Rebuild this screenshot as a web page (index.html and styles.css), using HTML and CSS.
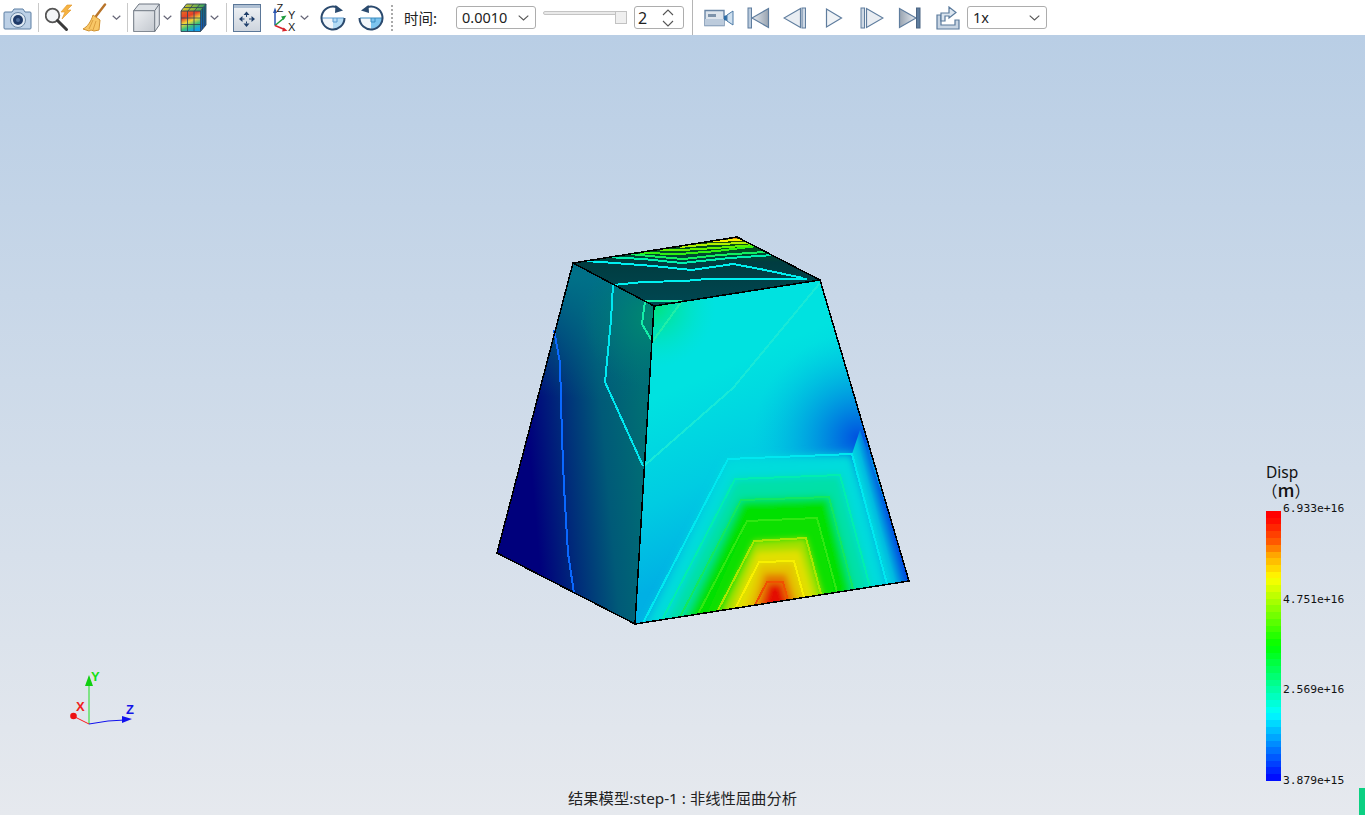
FILE: index.html
```html
<!DOCTYPE html>
<html lang="zh">
<head>
<meta charset="utf-8">
<title>结果模型</title>
<link rel="stylesheet" href="styles.css">
</head>
<body>
<header class="toolbar">
  <div class="group group-a">
    <svg class="icon" width="30" height="24" viewBox="0 0 30 24"><path d="M2 6h7l2-3h9l2 3h5a1 1 0 0 1 1 1v15a1 1 0 0 1-1 1H2a1 1 0 0 1-1-1V7a1 1 0 0 1 1-1z" fill="#bcd0e6" stroke="#5d7fa3"/><circle cx="15" cy="14" r="7.500" fill="#dfe9f3" stroke="#6c88a6"/><circle cx="15" cy="14" r="5" fill="#1f3a68"/><circle cx="15" cy="14" r="2" fill="#4e6d9c"/></svg>
  </div>
  <span class="sep"></span>
  <div class="group group-b">
    <svg class="icon" width="28" height="28" viewBox="0 0 28 28"><path d="M22 1l-6 7h4l-3 7 9-9h-4l5-5z" fill="#f5b342" stroke="#e0952a" stroke-width=".6"/><circle cx="7.500" cy="11.500" r="6.800" fill="#f3f5f7" stroke="#555" stroke-width="1.800"/><path d="M12.500 16.500l9 9" stroke="#3a3a3a" stroke-width="3" stroke-linecap="round"/></svg>
    <svg class="icon broom" width="26" height="30" viewBox="0 0 26 30"><path d="M23 1.500L13 14.500" stroke="#b8742a" stroke-width="2.400" stroke-linecap="round"/><path d="M11 12l7 5-1 10-5 1-3-1-2 1-3-1-3-1c4-2 8-7 10-14z" fill="#f8c766" stroke="#d0912f"/><path d="M11 17l-4 9M14 18l-3 9" stroke="#dc9f40"/></svg>
    <svg class="chev" width="9" height="5" viewBox="0 0 9 5"><path d="M.7.7l3.800 3.500L8.300.7" fill="none" stroke="#667" stroke-width="1.200"/></svg>
  </div>
  <span class="sep"></span>
  <div class="group group-c">
    <svg class="icon" width="27" height="29" viewBox="0 0 27 29"><defs><linearGradient id="cubeFace" x1="0" y1="0" x2="1" y2="1"><stop offset="0" stop-color="#eef0f3"/><stop offset="1" stop-color="#c3c8cf"/></linearGradient></defs><path d="M.7 7.700L6 1h20.300v21l-4.600 6.700z" fill="#dde1e6" stroke="#6d7580"/><path d="M.7 7.700h21v21h-21z" fill="url(#cubeFace)" stroke="#6d7580"/><path d="M21.700 7.700L26.300 1" stroke="#6d7580"/></svg>
    <svg class="chev" width="9" height="5" viewBox="0 0 9 5"><path d="M.7.7l3.800 3.500L8.300.7" fill="none" stroke="#667" stroke-width="1.200"/></svg>
    <svg class="icon rubik" width="27" height="29" viewBox="0 0 27 29"><defs><linearGradient id="rubikFace" x1=".1" y1="0" x2=".5" y2="1"><stop offset="0" stop-color="#e66a1e"/><stop offset=".3" stop-color="#e5402a"/><stop offset=".55" stop-color="#f2d83a"/><stop offset=".78" stop-color="#3cc07a"/><stop offset="1" stop-color="#14a0e8"/></linearGradient><linearGradient id="rubikTop" x1="0" x2="1"><stop offset="0" stop-color="#e8c828"/><stop offset="1" stop-color="#2ca060"/></linearGradient><linearGradient id="rubikSide" x1="0" y1="0" x2="0" y2="1"><stop offset="0" stop-color="#137a78"/><stop offset="1" stop-color="#1458c8"/></linearGradient></defs><path d="M1 8l5.500-7H26L20.500 8z" fill="url(#rubikTop)"/><path d="M20.500 8L26 1v21l-5.500 6.500z" fill="url(#rubikSide)"/><path d="M1 8h19.500v20.500H1z" fill="url(#rubikFace)"/><path d="M1 8l5.500-7H26v21l-5.500 6.500H1zM1 8h19.500v20.500M20.500 8L26 1" fill="none" stroke="#2c4458" stroke-width=".9"/><path d="M7.500 8v20.500M14 8v20.500M1 15h19.500M1 21.500h19.500M8 8l5.500-7M14.500 8L20 1M4 4.500h19M22.500 6v20M24.300 3.500v20" stroke="#2c4458" stroke-width=".8" fill="none"/></svg>
    <svg class="chev" width="9" height="5" viewBox="0 0 9 5"><path d="M.7.7l3.800 3.500L8.300.7" fill="none" stroke="#667" stroke-width="1.200"/></svg>
  </div>
  <span class="sep"></span>
  <div class="group group-d">
    <svg class="icon" width="28" height="28" viewBox="0 0 28 28"><defs><linearGradient id="fitBg" x1="0" y1="0" x2="0" y2="1"><stop offset="0" stop-color="#f0f3f6"/><stop offset="1" stop-color="#cdd4dd"/></linearGradient></defs><rect x=".5" y=".5" width="27" height="27" fill="url(#fitBg)" stroke="#5b7798"/><rect x="1" y="1" width="26" height="3" fill="#aebfd3"/><path d="M13.500 7.500l-3 3.500h6zM13.500 23l-3-3.500h6zM6 15l3.500-3v6zM22 15l-3.500-3v6z" fill="#1f3f6b"/><path d="M13.500 11v2M13.500 17.500v2M9.500 15h2M16 15h2.500" stroke="#1f3f6b"/></svg>
    <svg class="icon axis-icon" width="26" height="30" viewBox="0 0 26 30"><path d="M2 22.500V8" stroke="#2a55b0" stroke-width="1.500"/><path d="M2 4.500L0 10h4z" fill="#2a55b0"/><path d="M2 22.500L11 15" stroke="#1d9a3c" stroke-width="1.500"/><path d="M13.500 12.500l-5.500 1 2.500 3.500z" fill="#1d9a3c"/><path d="M2 22.500l9.500 4" stroke="#d8232a" stroke-width="1.500"/><path d="M14.500 27.800l-5.500.7 1.500-4z" fill="#d8232a"/><text class="axis-letter" x="3.500" y="9">Z</text><text class="axis-letter" x="15" y="15.500">Y</text><text class="axis-letter" x="15" y="27.500">X</text></svg>
    <svg class="chev" width="9" height="5" viewBox="0 0 9 5"><path d="M.7.7l3.800 3.500L8.300.7" fill="none" stroke="#667" stroke-width="1.200"/></svg>
    <svg class="icon rot" width="26" height="26" viewBox="0 0 26 26"><path d="M2 13h22a11 11 0 0 1-22 0z" fill="#f2f6fa"/><path d="M13 13h11a11 11 0 0 1-11 11z" fill="#b5dcf5"/><path d="M2 13h22M13 13v4h4v-4" fill="none" stroke="#5a9ad0"/><path d="M24.500 13A11.500 11.500 0 1 1 17 2.200" fill="none" stroke="#2b4a6e" stroke-width="2"/><path d="M15.500 0L23 5.500l-8 2.500z" fill="#2b4a6e"/></svg>
    <svg class="icon rot rot-b" width="26" height="26" viewBox="0 0 26 26"><path d="M2 13h22a11 11 0 0 1-22 0z" fill="#f2f6fa"/><path d="M13 13h11a11 11 0 0 1-11 11z" fill="#7cc4ef"/><path d="M2 13h22M13 13v4h4v-4" fill="none" stroke="#3a8cc0"/><path d="M1.500 13A11.500 11.500 0 1 0 9 2.200" fill="none" stroke="#2b4a6e" stroke-width="2"/><path d="M10.500 0L3 5.500l8 2.500z" fill="#2b4a6e"/></svg>
    <span class="dotted"></span>
  </div>
  <div class="time-group">
    <span class="time-label">时间:</span>
    <div class="combo combo-time"><span>0.0010</span><svg class="combo-chev" width="11" height="6" viewBox="0 0 11 6"><path d="M.7.7l4.800 4.200L10.300.7" fill="none" stroke="#555" stroke-width="1.100"/></svg></div>
    <div class="slider"><span class="slider-track"></span><span class="slider-thumb"></span></div>
    <div class="combo spin"><span>2</span><svg class="spin-arrows" width="12" height="18" viewBox="0 0 12 18"><path d="M1 6l5-5 5 5M1 12l5 5 5-5" fill="none" stroke="#555" stroke-width="1.100"/></svg></div>
  </div>
  <span class="sep sep-tall"></span>
  <div class="group group-play">
    <svg class="icon" width="30" height="18" viewBox="0 0 30 18"><path d="M1 1.500h19v15H1z" fill="#dde4ec" stroke="#6a86a6" stroke-width="1.400"/><path d="M1 10h19v6.500H1z" fill="#bccbdc"/><rect x="4" y="5" width="8" height="3" fill="#7d93ab"/><path d="M20 7l3-1v6l-3-1z" fill="#2e6fa8"/><path d="M23 6l6-4v14l-6-4z" fill="#cfe0ef" stroke="#4c7aa6"/></svg>
    <svg class="icon" width="23" height="22" viewBox="0 0 23 22"><defs><linearGradient id="pg" x1="0" x2="1"><stop offset="0" stop-color="#e6ebf1"/><stop offset="1" stop-color="#98a3b0"/></linearGradient><linearGradient id="pr" x1="0" x2="1"><stop offset="0" stop-color="#98a3b0"/><stop offset="1" stop-color="#e6ebf1"/></linearGradient></defs><rect x="1" y="1" width="3.500" height="20" fill="#b9cadd" stroke="#5f7d9e"/><path d="M21.500 1.500v19L5 11z" fill="url(#pg)" stroke="#5f7d9e" stroke-width="1.200"/></svg>
    <svg class="icon" width="24" height="22" viewBox="0 0 24 22"><rect x="19" y="1" width="3.500" height="20" fill="#cfd9e4" stroke="#5f7d9e"/><path d="M17.500 1.500v19L1 11z" fill="#e9edf2" stroke="#5f7d9e" stroke-width="1.200"/></svg>
    <svg class="icon" width="18" height="22" viewBox="0 0 18 22"><path d="M1.500 2v18L16.500 11z" fill="#f0f3f6" stroke="#5f7d9e" stroke-width="1.200"/></svg>
    <svg class="icon" width="24" height="22" viewBox="0 0 24 22"><rect x="1" y="1" width="3.500" height="20" fill="#cfd9e4" stroke="#5f7d9e"/><path d="M6.500 1.500v19L23 11z" fill="#e9edf2" stroke="#5f7d9e" stroke-width="1.200"/></svg>
    <svg class="icon" width="23" height="22" viewBox="0 0 23 22"><path d="M1.500 1.500v19L18 11z" fill="url(#pr)" stroke="#5f7d9e" stroke-width="1.200"/><rect x="18.500" y="1" width="3.500" height="20" fill="#5f7d9e" stroke="#4a6482"/></svg>
    <svg class="icon" width="24" height="24" viewBox="0 0 24 24"><path d="M1 9h4v10h14v-5h4v9H1z" fill="#c8d5e3" stroke="#5a7a9c" stroke-width="1.200"/><path d="M5 15V7h8V4l0-3 7 5.500-7 5.500v-2H9v5z" fill="#dbe5ef" stroke="#5a7a9c" stroke-width="1.200"/></svg>
    <div class="combo combo-speed"><span>1x</span><svg class="combo-chev" width="11" height="6" viewBox="0 0 11 6"><path d="M.7.7l4.800 4.200L10.300.7" fill="none" stroke="#555" stroke-width="1.100"/></svg></div>
  </div>
</header>

<main class="viewport">
  <svg class="model" width="1365" height="780" viewBox="0 35 1365 780">
    <defs>
      <clipPath id="clipRight"><polygon points="654,306 820,280 909,581 635,624"/></clipPath>
      <clipPath id="clipTop"><polygon points="573,263 737,237 820,280 654,306"/></clipPath>
      <filter id="soft" x="-20%" y="-20%" width="140%" height="140%"><feGaussianBlur stdDeviation="4"/></filter>
      <filter id="softer" x="-20%" y="-20%" width="140%" height="140%"><feGaussianBlur stdDeviation="3"/></filter>
      <linearGradient id="leftFace" gradientUnits="userSpaceOnUse" x1="530" y1="455" x2="645" y2="445">
        <stop offset="0" stop-color="#00007c"/>
        <stop offset=".3" stop-color="#002a7a"/>
        <stop offset=".65" stop-color="#005a78"/>
        <stop offset="1" stop-color="#006e74"/>
      </linearGradient>
      <linearGradient id="rightBase" gradientUnits="userSpaceOnUse" x1="650" y1="400" x2="720" y2="560">
        <stop offset="0" stop-color="#00e2e0"/>
        <stop offset=".55" stop-color="#00cce2"/>
        <stop offset="1" stop-color="#00b0e4"/>
      </linearGradient>
      <radialGradient id="blueSpot" gradientUnits="userSpaceOnUse" cx="858" cy="438" r="105">
        <stop offset="0" stop-color="#0050e0"/>
        <stop offset=".35" stop-color="#0088e0" stop-opacity=".85"/>
        <stop offset="1" stop-color="#00c0e0" stop-opacity="0"/>
      </radialGradient>
      <radialGradient id="greenSpot" gradientUnits="userSpaceOnUse" cx="654" cy="306" r="62">
        <stop offset="0" stop-color="#00e47a"/>
        <stop offset="1" stop-color="#00e4c8" stop-opacity="0"/>
      </radialGradient>
      <linearGradient id="edgeBlue" gradientUnits="userSpaceOnUse" x1="866" y1="510" x2="888" y2="504">
        <stop offset="0" stop-color="#00dce0"/>
        <stop offset=".4" stop-color="#00b8e0"/>
        <stop offset=".75" stop-color="#0070e0"/>
        <stop offset="1" stop-color="#0040e0"/>
      </linearGradient>
      <linearGradient id="topFace" gradientUnits="userSpaceOnUse" x1="700" y1="300" x2="700" y2="238">
        <stop offset="0" stop-color="#004650"/>
        <stop offset=".61" stop-color="#003c40"/>
        <stop offset=".74" stop-color="#004a30"/>
        <stop offset=".87" stop-color="#005018"/>
        <stop offset="1" stop-color="#404800"/>
      </linearGradient>
      <radialGradient id="leftCorner" gradientUnits="userSpaceOnUse" cx="652" cy="318" r="70">
        <stop offset="0" stop-color="#008a70"/>
        <stop offset="1" stop-color="#007a74" stop-opacity="0"/>
      </radialGradient>
      <linearGradient id="leftTop" gradientUnits="userSpaceOnUse" x1="590" y1="400" x2="600" y2="280">
        <stop offset="0" stop-color="#006a80" stop-opacity="0"/>
        <stop offset="1" stop-color="#007088"/>
      </linearGradient>
    </defs>

    <polygon points="573,263 654,306 635,624 497,553" fill="url(#leftFace)"/>
    <polygon points="573,263 654,306 635,624 497,553" fill="url(#leftTop)"/>
    <polygon points="573,263 654,306 635,624 497,553" fill="url(#leftCorner)"/>

    <polygon points="654,306 820,280 909,581 635,624" fill="url(#rightBase)"/>
    <g clip-path="url(#clipRight)">
      <rect x="630" y="280" width="290" height="350" fill="url(#greenSpot)"/>
      <rect x="700" y="300" width="220" height="200" fill="url(#blueSpot)"/>
      <polygon points="852,454 890,590 915,590 860,430" fill="url(#edgeBlue)"/>
      <g filter="url(#soft)">
        <polygon points="643,630 728,459 852,454 887,590" fill="#00dcdc"/>
        <polygon points="662,630 735,479 840,475 870,590" fill="#00e0a8"/>
        <polygon points="680,630 741,500 829,497 853,595" fill="#00e000"/>
        <polygon points="700,630 748,521 816,518 835,595" fill="#10e000"/>
      </g>
      <g filter="url(#softer)">
        <polygon points="712,630 754,541 806,538 824,600" fill="#a0e000"/>
        <polygon points="724,630 757,552 800,550 816,604" fill="#e2e000"/>
        <polygon points="738,630 760,564 793,563 806,604" fill="#e4c400"/>
        <polygon points="748,630 765,574 786,574 798,610" fill="#e47800"/>
        <polygon points="755,630 769,584 781,584 790,612" fill="#e40800"/>
      </g>
      <g fill="none" stroke-width="2" shape-rendering="crispEdges">
        <polyline stroke="#00e8f0" points="643,623 728,459 852,454 887,584"/>
        <polyline stroke="#00eeb0" points="662,620 735,479 840,475 870,587"/>
        <polyline stroke="#10e860" points="680,617 741,500 829,497 853,589"/>
        <polyline stroke="#30e810" points="698,614 747,521 817,518 837,592"/>
        <polyline stroke="#a8e800" points="717,612 754,541 806,538 821,594"/>
        <polyline stroke="#f8f000" points="736,607 759,562 794,561 804,597"/>
        <polyline stroke="#f05000" points="755,605 767,582 783,582 788,601"/>
      </g>
      <g shape-rendering="crispEdges">
        <polyline fill="none" stroke="#18e8d8" stroke-width="2" points="820,283 733,388 644,466"/>
        <line x1="682" y1="301" x2="653" y2="341" stroke="#20eea8" stroke-width="2"/>
      </g>
    </g>

    <polygon points="573,263 737,237 820,280 654,306" fill="url(#topFace)"/>
    <g clip-path="url(#clipTop)" fill="none" stroke-width="2" shape-rendering="crispEdges">
      <polyline stroke="#00f0f0" points="613,285 643,282 685,281 707,279 807,279"/>
      <polyline stroke="#00f0f0" points="585,261 615,263 653,266 692,270 733,264 760,269 803,278"/>
      <polyline stroke="#00f0b0" points="607,257 643,259 682,263 730,258 773,255"/>
      <polyline stroke="#10f060" points="630,254 660,257 683,259 720,255 765,252"/>
      <polyline stroke="#30f010" points="640,253 680,254 717,251 757,246"/>
      <polyline stroke="#60f000" points="660,250 682,250 715,248 755,245"/>
      <polyline stroke="#b0f000" points="680,247 712,244 750,243"/>
      <polyline stroke="#f8f000" points="713,241 743,240"/>
      <polyline stroke="#f09000" points="733,238 742,237"/>
      <polyline stroke="#14eea8" points="645,301 682,301"/>
    </g>

    <g fill="none" stroke-width="2" shape-rendering="crispEdges">
      <polyline stroke="#00e8f0" points="613,285 611,320 605,382 643,466"/>
      <polyline stroke="#0a68ff" points="554,330 560,363 562,437 564,487 568,553 574,593"/>
      <polyline stroke="#14eea8" points="645,301 642,324 652,341"/>
    </g>

    <g fill="none" stroke="#000" stroke-width="1.500" shape-rendering="crispEdges">
      <polygon points="573,263 737,237 820,280 909,581 635,624 497,553"/>
      <polyline points="573,263 654,306 820,280"/>
      <line x1="654" y1="306" x2="635" y2="624"/>
    </g>

    <g class="triad">
      <line x1="89" y1="724" x2="89" y2="684" stroke="#20e020" stroke-width="1"/>
      <polygon points="89,675 85,686 93,686" fill="#10d010"/>
      <polyline points="89,724 73,716" fill="none" stroke="#ff1818" stroke-width="1"/>
      <circle cx="73.500" cy="716" r="3.300" fill="#ee1010"/>
      <polyline points="89,724 108,721 125,720" fill="none" stroke="#1010ee" stroke-width="1"/>
      <polygon points="132,719 122,716 122,723" fill="#1010ee"/>
      <text class="triad-letter triad-y" x="91" y="681">Y</text>
      <text class="triad-letter triad-x" x="76" y="711">X</text>
      <text class="triad-letter triad-z" x="126" y="714">Z</text>
    </g>
  </svg>

  <aside class="legend">
    <div class="legend-title">Disp</div>
    <div class="legend-unit">（<span class="legend-m">m</span>）</div>
    <div class="legend-body">
      <div class="legend-bar"></div>
      <div class="legend-labels">
        <span>6.933e+16</span>
        <span>4.751e+16</span>
        <span>2.569e+16</span>
        <span>3.879e+15</span>
      </div>
    </div>
  </aside>

  <footer class="caption">结果模型:step-1 : 非线性屈曲分析</footer>
  <span class="status-chip"></span>
</main>
</body>
</html>
```
FILE: styles.css
```css
* { box-sizing: border-box; }
html, body { margin: 0; height: 100%; overflow: hidden; }
body {
  width: 1365px;
  height: 815px;
  display: flex;
  flex-direction: column;
  font-family: "Noto Sans", "Noto Sans CJK SC", sans-serif;
  background: #fff;
  color: #222;
}
.toolbar {
  flex: 0 0 35px;
  display: flex;
  align-items: center;
  background: #fff;
  padding-left: 3px;
}
.group { display: flex; align-items: center; height: 100%; }
.icon { flex: none; display: block; }
.chev { flex: none; display: block; }
.sep { flex: none; width: 1px; height: 29px; background: #c9c9c9; }
.sep-tall { height: 35px; background: #b5b5b5; }
.group-a { width: 35px; }
.group-b { width: 88px; padding-left: 6px; }
.group-b .broom { margin-left: 9px; }
.group-b .chev { margin-left: 4px; }
.group-c { width: 98px; padding-left: 5px; }
.group-c .chev { margin-left: 3px; }
.group-c .rubik { margin-left: 8px; }
.group-d { width: 165px; padding-left: 6px; }
.group-d .axis-icon { margin-left: 12px; }
.group-d .chev { margin-left: 1px; }
.group-d .rot { margin-left: 11px; }
.group-d .rot-b { margin-left: 12px; }
.dotted { width: 0; height: 26px; margin-left: 7px; border-left: 2px dotted #aaa; }
.axis-letter { font: 11px "Liberation Sans", sans-serif; fill: #222; }
.time-group { display: flex; align-items: center; width: 300px; padding-left: 12px; }
.time-label { font-size: 14.500px; width: 52px; font-family: "Noto Sans CJK SC", sans-serif; }
.combo {
  display: flex;
  align-items: center;
  justify-content: space-between;
  height: 23px;
  border: 1px solid #adadad;
  border-radius: 3px;
  background: #fff;
  font-size: 14.500px;
  line-height: 1;
  padding: 0 5px;
}
.combo-time { width: 80px; }
.spin { width: 50px; padding-left: 3px; font-size: 16px; }
.combo-speed { width: 80px; }
.combo-chev { flex: none; margin-right: 1px; }
.spin-arrows { flex: none; margin-right: 4px; }
.slider { position: relative; width: 84px; height: 23px; margin: 0 7px; }
.slider-track {
  position: absolute; left: 0; right: 6px; top: 5px; height: 4px;
  background: #e9e9e9; border: 1px solid #c4c4c4; border-radius: 2px;
}
.slider-thumb {
  position: absolute; right: 0; top: 5px; width: 12px; height: 13px;
  background: #efefef; border: 1px solid #c2c2c2;
}
.group-play { padding-left: 11px; }
.group-play .icon:nth-of-type(1) { margin-right: 13px; }
.group-play .icon:nth-of-type(2) { margin-right: 13px; }
.group-play .icon:nth-of-type(3) { margin-right: 18px; }
.group-play .icon:nth-of-type(4) { margin-right: 17px; }
.group-play .icon:nth-of-type(5) { margin-right: 14px; }
.group-play .icon:nth-of-type(6) { margin-right: 15px; }
.group-play .icon:nth-of-type(7) { margin-right: 7px; }
.viewport {
  position: relative;
  flex: 1;
  background: linear-gradient(180deg, #b9cee5 0%, #e6e9ee 100%);
  overflow: hidden;
}
.model { position: absolute; left: 0; top: 0; display: block; }
.triad-letter { font: bold 13px "Liberation Sans", sans-serif; }
.triad-y { fill: #14e014; }
.triad-x { fill: #f02020; }
.triad-z { fill: #1414e8; }
.legend { position: absolute; left: 1266px; top: 428px; width: 90px; }
.legend-title { font-size: 15.500px; line-height: 18px; color: #111; }
.legend-unit { font-size: 15.500px; line-height: 17px; color: #111; font-family: "Noto Sans CJK SC", sans-serif; margin-left: -4px; height: 17px; }
.legend-m { font-size: 18px; font-weight: 500; }
.legend-body { display: flex; margin-top: 13px; height: 270px; }
.legend-bar {
  flex: 0 0 15px;
  background: linear-gradient(180deg,
    #ff0000 0 2.500%, #ff0d00 2.500% 5%, #ff2600 5% 7.500%, #ff4000 7.500% 10%,
    #ff5900 10% 12.500%, #ff8000 12.500% 15%, #ffa600 15% 17.500%, #ffbf00 17.500% 20%,
    #ffd900 20% 22.500%, #fff200 22.500% 25%, #f2ff00 25% 27.500%, #d9ff00 27.500% 30%,
    #bfff00 30% 32.500%, #a6ff00 32.500% 35%, #8cff00 35% 37.500%, #73ff00 37.500% 40%,
    #59ff00 40% 42.500%, #40ff00 42.500% 45%, #26ff00 45% 47.500%, #0dff00 47.500% 50%,
    #00ff0d 50% 52.500%, #00ff26 52.500% 55%, #00ff40 55% 57.500%, #00ff59 57.500% 60%,
    #00ff73 60% 62.500%, #00ff8c 62.500% 65%, #00ffa6 65% 67.500%, #00ffbf 67.500% 70%,
    #00ffd9 70% 72.500%, #00fff2 72.500% 75%, #00f2ff 75% 77.500%, #00d9ff 77.500% 80%,
    #00bfff 80% 82.500%, #00a6ff 82.500% 85%, #008cff 85% 87.500%, #0073ff 87.500% 90%,
    #0059ff 90% 92.500%, #0040ff 92.500% 95%, #0026ff 95% 97.500%, #000dff 97.500% 100%);
}
.legend-labels {
  flex: 1;
  display: flex;
  flex-direction: column;
  justify-content: space-between;
  margin: -9px 0 -7px 2px;
  font: 11.300px "DejaVu Sans Mono", monospace;
  line-height: 14px;
  color: #111;
}
.caption {
  position: absolute;
  left: 0;
  right: 0;
  bottom: 7px;
  text-align: center;
  font-size: 15.300px;
  line-height: 20px;
  color: #222;
}
.status-chip { position: absolute; right: 0; bottom: 0; width: 6px; height: 27px; background: #0bd082; }
```
